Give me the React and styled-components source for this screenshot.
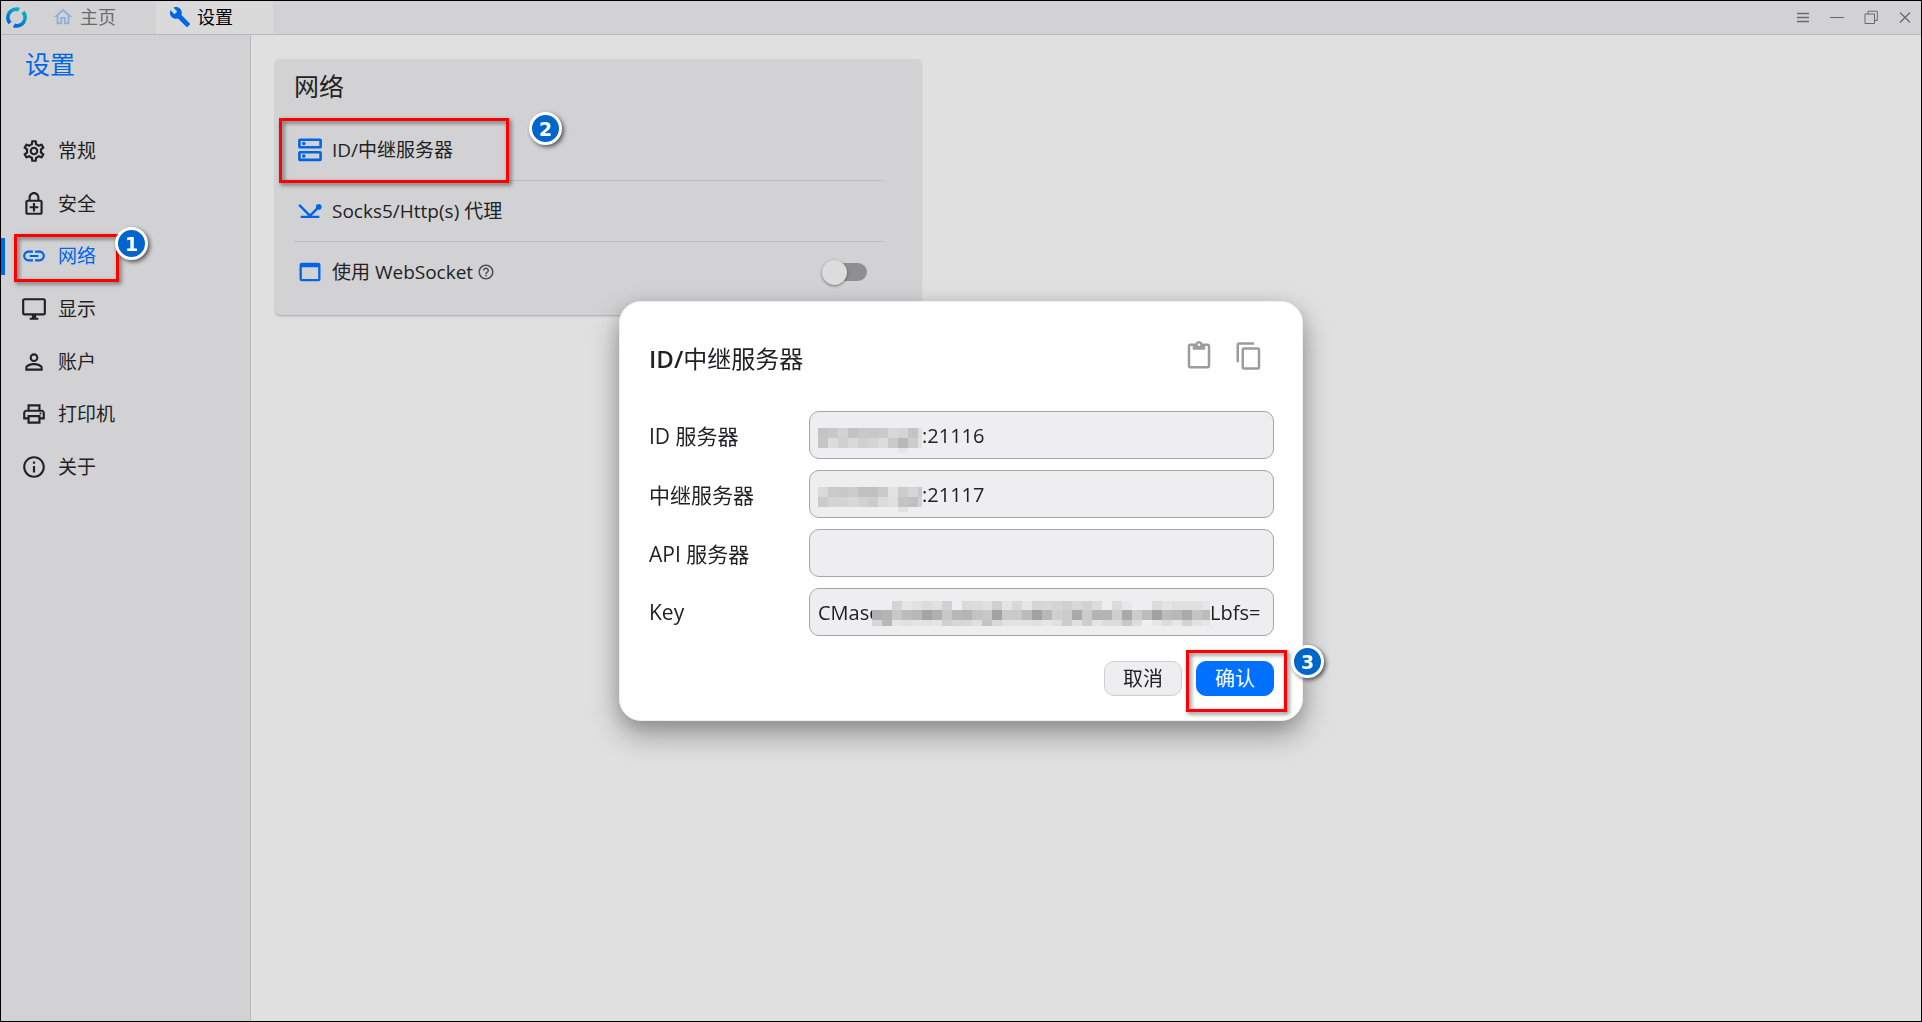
import { useState } from "react";
import styled, { createGlobalStyle, css } from "styled-components";
import {
  MdBuild,
  MdContentCopy,
  MdContentPaste,
  MdHelpOutline,
  MdInfoOutline,
  MdLink,
  MdNetworkPing,
  MdOutlineDesktopWindows,
  MdOutlineEnhancedEncryption,
  MdOutlineHome,
  MdOutlinePrint,
  MdOutlineSettings,
  MdOutlineWebAsset,
  MdPersonOutline,
} from "react-icons/md";

const GlobalStyle = createGlobalStyle`
  * {
    box-sizing: border-box;
  }
  body {
    margin: 0;
    font-family: "Open Sans", "Noto Sans CJK SC", sans-serif;
    color: #222224;
  }
  button, input {
    font-family: inherit;
    color: inherit;
  }
`;

const Window = styled.div`
  display: flex;
  flex-direction: column;
  min-height: 100vh;
  border: 1px solid #000;
  background: #e0e0e0;
`;

const TitleBar = styled.header`
  display: flex;
  height: 34px;
  background: #d2d2d4;
  border-bottom: 1px solid #b9b9bb;
`;

const LogoSlot = styled.div`
  display: flex;
  align-items: center;
  width: 38px;
  padding-left: 5px;
`;

const Tab = styled.button`
  display: flex;
  align-items: center;
  gap: 6px;
  width: 117px;
  padding: 0 13px 2px;
  border: 0;
  font-size: 18px;
  line-height: 24px;
  color: ${({ $active }) => ($active ? "#000" : "#6b6b6d")};
  background: ${({ $active }) => ($active ? "#dadadb" : "transparent")};

  svg {
    flex: none;
    color: ${({ $active }) => ($active ? "#0066e5" : "#8ab0e0")};
  }
`;

const WindowButtons = styled.div`
  display: flex;
  margin-left: auto;
`;

const WindowButton = styled.button`
  display: flex;
  align-items: center;
  justify-content: center;
  width: 34px;
  padding: 0 0 0 2px;
  border: 0;
  background: transparent;
  color: #6a6a6c;
`;

const Body = styled.div`
  display: flex;
  flex: 1;
`;

const Sidebar = styled.nav`
  width: 250px;
  background: #d2d2d4;
  border-right: 1px solid #b9b9bb;
`;

const SidebarTitle = styled.h1`
  margin: 0;
  padding: 11px 24px 0;
  font-size: 25px;
  font-weight: 400;
  line-height: 36px;
  color: #0066e5;
`;

const NavList = styled.div`
  display: grid;
  grid-auto-rows: 1fr;
  height: 368px;
  margin-top: 43px;
`;

const NavItem = styled.button`
  position: relative;
  display: flex;
  align-items: center;
  gap: 11px;
  width: 100%;
  padding: 0 20px;
  border: 0;
  background: transparent;
  font-size: 19px;
  line-height: 28px;
  text-align: left;
  color: ${({ $active }) => ($active ? "#0066e5" : "#222224")};

  ${({ $active }) =>
    $active &&
    css`
      &::before {
        content: "";
        position: absolute;
        left: 0;
        width: 4px;
        height: 37px;
        background: #0066e5;
      }
    `}
`;

const Content = styled.main`
  flex: 1;
  padding: 24px;
`;

const Card = styled.section`
  max-width: 646px;
  padding: 7px 38px 13px 19px;
  border-radius: 5px;
  background: #d2d2d4;
  box-shadow: 0 1px 2px rgba(0, 0, 0, 0.25);
`;

const CardTitle = styled.h2`
  margin: 0 0 13px;
  font-size: 25px;
  font-weight: 400;
  line-height: 40px;
`;

const Row = styled.div`
  position: relative;
  display: flex;
  align-items: center;
  gap: 8px;
  height: 61px;
  padding: 0 16px 0 2px;
  font-size: 19px;
  line-height: 28px;

  & + & {
    border-top: 1px solid #bcbcbe;
  }

  svg {
    color: #0066e5;
  }
`;

const RowButton = styled.button`
  display: flex;
  flex: 1;
  align-items: center;
  gap: 8px;
  height: 100%;
  padding: 0;
  border: 0;
  background: transparent;
  font-size: 19px;
  line-height: 28px;
`;

const RowLabel = styled.label`
  display: flex;
  align-items: center;
  gap: 8px;
`;

const HelpIcon = styled(MdHelpOutline)`
  && {
    margin-left: -4px;
    color: #4c4c4e;
  }
`;

const Switch = styled.input`
  appearance: none;
  position: relative;
  width: 39px;
  height: 18px;
  margin: 0 0 0 auto;
  border-radius: 9px;
  background: #8f8f91;

  &::before {
    content: "";
    position: absolute;
    top: -3px;
    left: -6px;
    width: 25px;
    height: 25px;
    border-radius: 50%;
    background: #dcdcdc;
    box-shadow: 0 1px 3px rgba(0, 0, 0, 0.45);
  }

  &:checked::before {
    left: 20px;
  }
`;

const Overlay = styled.div`
  position: fixed;
  inset: 0;
  display: flex;
  align-items: center;
  justify-content: center;
  pointer-events: none;
`;

const Dialog = styled.form`
  width: 684px;
  padding: 29px 28px 24px 29px;
  border: 1px solid #f0f0f0;
  border-radius: 22px;
  background: #fff;
  box-shadow: 0 14px 30px rgba(0, 0, 0, 0.32), 0 4px 18px rgba(0, 0, 0, 0.14);
  pointer-events: auto;
`;

const DialogHeader = styled.div`
  display: flex;
  align-items: center;
  justify-content: space-between;
  height: 56px;
  margin-bottom: 24px;
`;

const DialogTitle = styled.h2`
  margin: 0;
  font-size: 24px;
  font-weight: 400;
  line-height: 36px;

  b {
    font-weight: 600;
  }
`;

const DialogTools = styled.div`
  display: flex;
  gap: 20px;
  padding: 0 10px 6px 0;
`;

const ToolButton = styled.button`
  display: flex;
  padding: 0;
  border: 0;
  background: transparent;
  color: #9c9c9c;
`;

const Fields = styled.div`
  display: grid;
  grid-template-columns: 160px 1fr;
  row-gap: 11px;
  align-items: center;
  font-size: 21px;
`;

const FieldBox = styled.div`
  display: flex;
  align-items: center;
  height: 48px;
  padding: 2px 8px 0;
  border: 1px solid #a6a6a8;
  border-radius: 10px;
  background: #eeeef0;
  white-space: nowrap;
`;

const FieldInput = styled.input`
  flex: ${({ $clipped }) => ($clipped ? "0 0 54px" : "1")};
  width: 0;
  min-width: 0;
  padding: 0;
  border: 0;
  outline: 0;
  background: transparent;
  font-size: 20px;
  line-height: 28px;
`;

const FieldTail = styled.span`
  font-size: 20px;
  line-height: 28px;
`;

const MaskGrid = styled.span`
  display: grid;
  flex: none;
  grid-template-columns: repeat(${({ $columns }) => $columns}, 10px);
  grid-template-rows: ${({ $wide }) => ($wide ? "9px 10px 6px" : "10px 10px 5px")};
  width: ${({ $wide }) => ($wide ? 338 : 104)}px;
  padding-top: ${({ $wide }) => ($wide ? 0 : 9)}px;
  overflow: hidden;
`;

const MaskCell = styled.span`
  background: ${({ $tone }) => ($tone === "--" ? "transparent" : `#${$tone}${$tone}${$tone}`)};
`;

const Actions = styled.div`
  display: flex;
  justify-content: flex-end;
  gap: 14px;
  margin-top: 25px;
`;

const ActionSlot = styled.div`
  position: relative;
`;

const ActionButton = styled.button`
  width: 78px;
  height: 35px;
  padding: 0;
  border: 1px solid ${({ $primary }) => ($primary ? "#0071ff" : "#cfcfd1")};
  border-radius: 10px;
  background: ${({ $primary }) => ($primary ? "#0071ff" : "#eeeef0")};
  color: ${({ $primary }) => ($primary ? "#fff" : "#222224")};
  font-size: 20px;
  line-height: 28px;
`;

/* Tutorial marks: red frame round a control and a numbered badge by it */
const frames = {
  nav: css`
    top: 4px;
    left: 13px;
    width: 105px;
    height: 48px;
  `,
  row: css`
    top: -1px;
    left: -15px;
    width: 230px;
    height: 65px;
  `,
  action: css`
    top: -11px;
    left: -10px;
    width: 101px;
    height: 62px;
  `,
};

const badges = {
  nav: css`
    top: -3px;
    left: 114px;
  `,
  row: css`
    top: -7px;
    left: 235px;
  `,
  action: css`
    top: -16px;
    left: 95px;
  `,
};

const Frame = styled.span`
  position: absolute;
  z-index: 1;
  border: 3px solid #fe0000;
  filter: drop-shadow(2px 2px 2px rgba(0, 0, 0, 0.55));
  pointer-events: none;
  ${({ $at }) => frames[$at]}
`;

const Badge = styled.span`
  position: absolute;
  z-index: 1;
  display: flex;
  align-items: center;
  justify-content: center;
  width: 33px;
  height: 33px;
  border: 3px solid #fff;
  border-radius: 50%;
  background: #0066cc;
  box-shadow: 2px 2px 4px rgba(0, 0, 0, 0.6);
  color: #fff;
  font-family: "DejaVu Sans", sans-serif;
  font-size: 19px;
  font-weight: 700;
  line-height: 20px;
  ${({ $at }) => badges[$at]}
`;

const Logo = () => (
  <svg width="21" height="21" viewBox="0 0 32 32">
    <defs>
      <linearGradient id="logo" x1="0.2" y1="0.9" x2="0.8" y2="0.1">
        <stop offset="0" stopColor="#0064dc" />
        <stop offset="1" stopColor="#00b4c0" />
      </linearGradient>
    </defs>
    <g fill="url(#logo)">
      <path d="M21.5 1.2 A16 16 0 0 0 3.6 26.2 L8.6 22.6 A9.4 9.4 0 0 1 18.4 7 Z" />
      <path d="M10.5 30.8 A16 16 0 0 0 28.4 5.8 L23.4 9.4 A9.4 9.4 0 0 1 13.6 25 Z" />
    </g>
  </svg>
);

const ServerIcon = () => (
  <svg width="28" height="28" viewBox="0 0 28 28" fill="none" stroke="currentColor" strokeWidth="2.6">
    <rect x="3.4" y="3.7" width="21.2" height="7.6" rx="0.6" />
    <rect x="3.4" y="16.3" width="21.2" height="7.6" rx="0.6" />
    <circle cx="7.8" cy="7.5" r="1.8" fill="currentColor" stroke="none" />
    <circle cx="7.8" cy="20.1" r="1.8" fill="currentColor" stroke="none" />
  </svg>
);

const windowIcons = [
  { label: "菜单", shape: <path d="M1 3.5h12M1 7.5h12M1 11.5h12" strokeWidth="1.4" /> },
  { label: "最小化", shape: <path d="M0 7.5h14" /> },
  { label: "还原", shape: <path d="M1 4h9.5v9.5H1zM4 4V1.2h9.3v9.3h-2.8" /> },
  { label: "关闭", shape: <path d="M2 2.5l10 10M12 2.5l-10 10" strokeWidth="1.3" /> },
];

const navItems = [
  { label: "常规", Icon: MdOutlineSettings },
  { label: "安全", Icon: MdOutlineEnhancedEncryption },
  { label: "网络", Icon: MdLink },
  { label: "显示", Icon: MdOutlineDesktopWindows },
  { label: "账户", Icon: MdPersonOutline },
  { label: "打印机", Icon: MdOutlinePrint },
  { label: "关于", Icon: MdInfoOutline },
];

// Grey tones of the masked text, one line per row of cells
const idMask = [
  "c4 c8 d2 c2 c8 c8 ca d8 d4 c4 de",
  "c6 dc d0 da d0 d4 dc ca b8 cc e2",
  "-- -- -- -- -- -- -- -- e6 -- --",
];

const relayMask = [
  "da ca c8 cc c0 c0 ca e2 cc d6 c8",
  "cc d4 d4 d8 d2 cc dc e0 c4 c0 d2",
  "-- -- -- -- -- -- -- -- e2 -- --",
];

const keyMask = [
  "-- -- d4 e6 e2 dc e0 d0 -- da dc e0 d0 e4 d8 e6 d6 d8 d4 d0 d8 d2 dc ee dc e8 -- ee dc e4 e0 e0 e0 e6",
  "b0 b4 c8 bc b8 a4 b0 c8 b8 b4 c4 c8 a2 ca ca bc a2 b8 d0 cc aa cc b4 b4 ce aa cc bc a2 bc b8 aa c4 bc",
  "d6 b8 e4 e0 e4 e2 e4 d0 d6 d8 e0 c4 d8 e2 e2 e2 e0 e6 e0 cc e0 ce e4 dc dc c8 dc f0 e6 dc e6 d2 e2 e6",
];

function Mask({ rows, wide }) {
  const cells = rows.map((row) => row.split(" "));
  return (
    <MaskGrid $columns={cells[0].length} $wide={wide} aria-hidden="true">
      {cells.flat().map((tone, index) => (
        <MaskCell key={index} $tone={tone} />
      ))}
    </MaskGrid>
  );
}

function App() {
  const [page, setPage] = useState("网络");
  const [idServer, setIdServer] = useState(":21116");
  const [relayServer, setRelayServer] = useState(":21117");
  const [apiServer, setApiServer] = useState("");
  const [keyText, setKeyText] = useState("CMasq");

  return (
    <>
      <GlobalStyle />
      <Window>
        <TitleBar>
          <LogoSlot>
            <Logo />
          </LogoSlot>
          <Tab type="button">
            <MdOutlineHome size={22} />
            主页
          </Tab>
          <Tab type="button" $active>
            <MdBuild size={22} />
            设置
          </Tab>
          <WindowButtons>
            {windowIcons.map(({ label, shape }) => (
              <WindowButton key={label} type="button" aria-label={label}>
                <svg width="14" height="15" viewBox="0 0 14 15" fill="none" stroke="currentColor">
                  {shape}
                </svg>
              </WindowButton>
            ))}
          </WindowButtons>
        </TitleBar>
        <Body>
          <Sidebar>
            <SidebarTitle>设置</SidebarTitle>
            <NavList>
              {navItems.map(({ label, Icon }) => (
                <NavItem key={label} type="button" $active={label === page} onClick={() => setPage(label)}>
                  <Icon size={26} />
                  {label}
                  {label === "网络" && (
                    <>
                      <Frame $at="nav" />
                      <Badge $at="nav">1</Badge>
                    </>
                  )}
                </NavItem>
              ))}
            </NavList>
          </Sidebar>
          <Content>
            <Card>
              <CardTitle>网络</CardTitle>
              <Row>
                <RowButton type="button">
                  <ServerIcon />
                  ID/中继服务器
                </RowButton>
                <Frame $at="row" />
                <Badge $at="row">2</Badge>
              </Row>
              <Row>
                <RowButton type="button">
                  <MdNetworkPing size={28} />
                  Socks5/Http(s) 代理
                </RowButton>
              </Row>
              <Row>
                <RowLabel htmlFor="websocket">
                  <MdOutlineWebAsset size={28} />
                  使用 WebSocket
                  <HelpIcon size={18} />
                </RowLabel>
                <Switch id="websocket" type="checkbox" role="switch" />
              </Row>
            </Card>
          </Content>
        </Body>
      </Window>
      <Overlay>
        <Dialog role="dialog" aria-labelledby="dialog-title" onSubmit={(e) => e.preventDefault()}>
          <DialogHeader>
            <DialogTitle id="dialog-title">
              <b>ID/</b>中继服务器
            </DialogTitle>
            <DialogTools>
              <ToolButton type="button" aria-label="粘贴">
                <MdContentPaste size={30} />
              </ToolButton>
              <ToolButton type="button" aria-label="复制">
                <MdContentCopy size={30} />
              </ToolButton>
            </DialogTools>
          </DialogHeader>
          <Fields>
            <label htmlFor="id-server">ID 服务器</label>
            <FieldBox>
              <Mask rows={idMask} />
              <FieldInput id="id-server" value={idServer} onChange={(e) => setIdServer(e.target.value)} />
            </FieldBox>
            <label htmlFor="relay-server">中继服务器</label>
            <FieldBox>
              <Mask rows={relayMask} />
              <FieldInput id="relay-server" value={relayServer} onChange={(e) => setRelayServer(e.target.value)} />
            </FieldBox>
            <label htmlFor="api-server">API 服务器</label>
            <FieldBox>
              <FieldInput id="api-server" value={apiServer} onChange={(e) => setApiServer(e.target.value)} />
            </FieldBox>
            <label htmlFor="key">Key</label>
            <FieldBox>
              <FieldInput id="key" $clipped value={keyText} onChange={(e) => setKeyText(e.target.value)} />
              <Mask rows={keyMask} wide />
              <FieldTail>Lbfs=</FieldTail>
            </FieldBox>
          </Fields>
          <Actions>
            <ActionButton type="button">取消</ActionButton>
            <ActionSlot>
              <ActionButton type="submit" $primary>
                确认
              </ActionButton>
              <Frame $at="action" />
              <Badge $at="action">3</Badge>
            </ActionSlot>
          </Actions>
        </Dialog>
      </Overlay>
    </>
  );
}

export default App;
